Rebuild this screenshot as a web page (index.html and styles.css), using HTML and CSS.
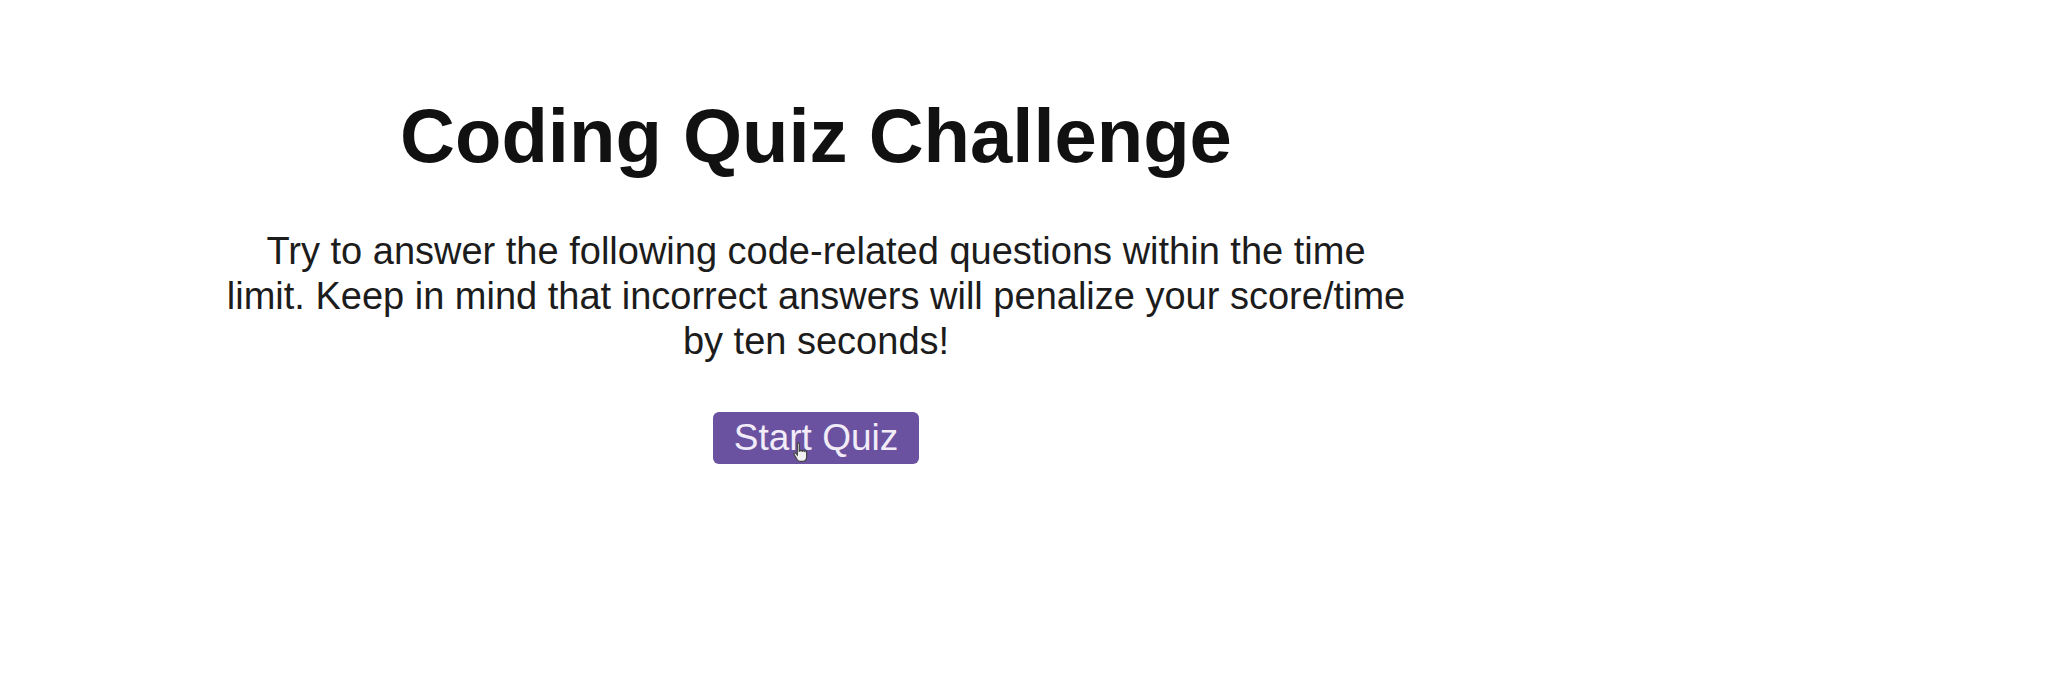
FILE: index.html
```html
<!DOCTYPE html>
<html lang="en">
<head>
<meta charset="utf-8">
<title>Coding Quiz Challenge</title>
<link rel="stylesheet" href="styles.css">
</head>
<body>
<main class="quiz">
  <h1 class="quiz-title">Coding Quiz Challenge</h1>
  <p class="quiz-intro">Try to answer the following code-related questions within the time limit. Keep in mind that incorrect answers will penalize your score/time by ten seconds!</p>
  <div class="start-wrap">
    <button class="start-btn" type="button">Start Quiz</button>
    <svg class="cursor" width="20" height="22" viewBox="0 0 16 18" aria-hidden="true">
      <path d="M5 1.5c0-.8 1.6-.8 1.6 0v6l.6-.1c0-.8 1.5-.8 1.5 0l.5.1c0-.8 1.5-.8 1.5 0l.4.2c0-.7 1.5-.7 1.5.1v4.5c0 2-1.3 3.5-3.2 3.5H7.2c-1 0-1.8-.6-2.4-1.5L2.3 10c-.5-.8.6-1.6 1.3-.9L5 10.6z" fill="#f2f2f2" stroke="#444" stroke-width="1"/>
    </svg>
  </div>
</main>
</body>
</html>
```

FILE: styles.css
```css
html, body {
  margin: 0;
  padding: 0;
  background: #ffffff;
}

body {
  font-family: "Liberation Sans", Arial, Helvetica, sans-serif;
  color: #1a1a1a;
}

.quiz {
  width: 1184px;
  margin-left: 224px;
  padding-top: 98px;
  text-align: center;
}

.quiz-title {
  margin: 0;
  font-size: 76px;
  line-height: 76px;
  font-weight: 700;
  color: #111111;
}

.quiz-intro {
  margin: 55px 0 0;
  font-size: 38px;
  line-height: 45px;
  color: #1c1c1c;
}

.start-wrap {
  position: relative;
  display: inline-block;
  margin-top: 48px;
}

.start-btn {
  display: block;
  font-family: "Liberation Sans", Arial, Helvetica, sans-serif;
  font-size: 37px;
  line-height: 44px;
  padding: 4px 21px;
  border: none;
  border-radius: 6px;
  background: #6b52a1;
  color: #f1ecf8;
  cursor: pointer;
}

.cursor {
  position: absolute;
  left: 78px;
  top: 30px;
}
```
